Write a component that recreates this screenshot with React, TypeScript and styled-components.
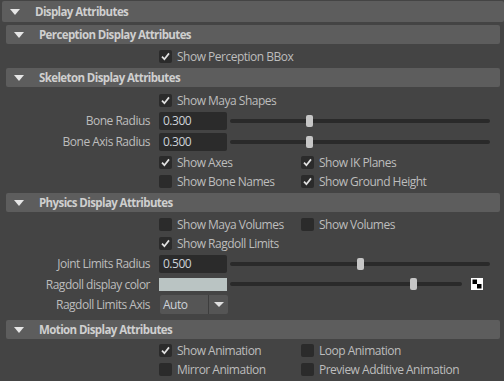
import React from "react";
import styled, { createGlobalStyle } from "styled-components";

const GlobalStyle = createGlobalStyle`
  html, body {
    margin: 0;
    padding: 0;
    background: #444444;
  }
`;

type CheckItem = { label: string; checked: boolean };

type Row =
  | { kind: "checks"; items: CheckItem[] }
  | { kind: "slider"; label: string; value: number }
  | { kind: "color"; label: string; color: string; value: number }
  | { kind: "select"; label: string; value: string };

type Section = { title: string; pad: string; rows: Row[] };

const sections: Section[] = [
  {
    title: "Perception Display Attributes",
    pad: "3px 0 2px",
    rows: [{ kind: "checks", items: [{ label: "Show Perception BBox", checked: true }] }],
  },
  {
    title: "Skeleton Display Attributes",
    pad: "4px 0 2px",
    rows: [
      { kind: "checks", items: [{ label: "Show Maya Shapes", checked: true }] },
      { kind: "slider", label: "Bone Radius", value: 0.3 },
      { kind: "slider", label: "Bone Axis Radius", value: 0.3 },
      {
        kind: "checks",
        items: [
          { label: "Show Axes", checked: true },
          { label: "Show IK Planes", checked: true },
        ],
      },
      {
        kind: "checks",
        items: [
          { label: "Show Bone Names", checked: false },
          { label: "Show Ground Height", checked: true },
        ],
      },
    ],
  },
  {
    title: "Physics Display Attributes",
    pad: "3px 0 5px",
    rows: [
      {
        kind: "checks",
        items: [
          { label: "Show Maya Volumes", checked: false },
          { label: "Show Volumes", checked: false },
        ],
      },
      { kind: "checks", items: [{ label: "Show Ragdoll Limits", checked: true }] },
      { kind: "slider", label: "Joint Limits Radius", value: 0.5 },
      { kind: "color", label: "Ragdoll display color", color: "#bac4c3", value: 0.8 },
      { kind: "select", label: "Ragdoll Limits Axis", value: "Auto" },
    ],
  },
  {
    title: "Motion Display Attributes",
    pad: "2px 0 0",
    rows: [
      {
        kind: "checks",
        items: [
          { label: "Show Animation", checked: true },
          { label: "Loop Animation", checked: false },
        ],
      },
      {
        kind: "checks",
        items: [
          { label: "Mirror Animation", checked: false },
          { label: "Preview Additive Animation", checked: false },
        ],
      },
    ],
  },
];

const fmt = (v: number) => v.toFixed(3);

export default function App() {
  const renderRow = (row: Row, idx: number) => {
    if (row.kind === "checks") {
      return (
        <CheckRow key={idx}>
          {row.items.map((c) => (
            <CheckLabel key={c.label}>
              <Box>
                {c.checked && (
                  <svg width="11" height="11" viewBox="0 0 11 11">
                    <path d="M2 5.6 L4.4 8.2 L9 2.4" fill="none" stroke="#e2e2e2" strokeWidth="1.7" />
                  </svg>
                )}
              </Box>
              {c.label}
            </CheckLabel>
          ))}
        </CheckRow>
      );
    }
    if (row.kind === "slider") {
      return (
        <FieldRow key={idx}>
          <Label>{row.label}</Label>
          <NumField>{fmt(row.value)}</NumField>
          <Slider $end={10}>
            <Thumb style={{ left: `calc(${row.value} * (100% - 7px))` }} />
          </Slider>
        </FieldRow>
      );
    }
    if (row.kind === "color") {
      return (
        <FieldRow key={idx} $short>
          <Label>{row.label}</Label>
          <Swatch $color={row.color} />
          <Slider $end={0}>
            <Thumb style={{ left: `calc(${row.value} * (100% - 7px))` }} />
          </Slider>
          <Checker>
            <svg width="12" height="12" viewBox="0 0 12 12">
              <rect x="0" y="0" width="12" height="12" fill="#ffffff" />
              <rect x="1.5" y="1.5" width="4.5" height="4.5" fill="#000000" />
              <rect x="6" y="6" width="4.5" height="4.5" fill="#000000" />
            </svg>
          </Checker>
        </FieldRow>
      );
    }
    return (
      <FieldRow key={idx}>
        <Label>{row.label}</Label>
        <Select>
          <span>{row.value}</span>
          <SelectArrow />
        </Select>
      </FieldRow>
    );
  };

  return (
    <Page>
      <GlobalStyle />
      <MainHeader>
        <Caret />
        Display Attributes
      </MainHeader>
      <Body>
        {sections.map((s) => (
          <div key={s.title}>
            <SubHeader>
              <Caret />
              {s.title}
            </SubHeader>
            <SectionBody $pad={s.pad}>{s.rows.map(renderRow)}</SectionBody>
          </div>
        ))}
      </Body>
    </Page>
  );
}

const Page = styled.div`
  width: 504px;
  height: 381px;
  overflow: hidden;
  background: #444444;
  padding-top: 1px;
  box-sizing: border-box;
  font-family: "Open Sans", "Noto Sans", sans-serif;
  font-size: 12px;
  letter-spacing: -0.5px;
  color: #bdbdbd;
`;

const Caret = styled.span`
  width: 0;
  height: 0;
  border-left: 5px solid transparent;
  border-right: 5px solid transparent;
  border-top: 6px solid #e6e6e6;
  margin-right: 15px;
  flex-shrink: 0;
`;

const MainHeader = styled.div`
  margin-left: 2px;
  height: 21px;
  background: #5d5d5d;
  border-radius: 2px;
  display: flex;
  align-items: center;
  padding-left: 8px;
  font-weight: bold;
  font-size: 11.5px;
  letter-spacing: -0.6px;
  color: #cfcfcf;
`;

const Body = styled.div`
  padding: 3px 4px 0 6px;
`;

const SubHeader = styled(MainHeader)`
  margin-left: 0;
  height: 19px;
`;

const SectionBody = styled.div<{ $pad: string }>`
  padding: ${(p) => p.$pad};
  display: flex;
  flex-direction: column;
`;

const CheckRow = styled.div`
  height: 19px;
  padding-left: 153px;
  display: grid;
  grid-template-columns: 142px 1fr;
  align-items: center;
`;

const CheckLabel = styled.label`
  display: flex;
  align-items: center;
  white-space: nowrap;
`;

const Box = styled.span`
  width: 13px;
  height: 13px;
  background: #2b2b2b;
  border-radius: 2px;
  margin-right: 5px;
  display: flex;
  align-items: center;
  justify-content: center;
`;

const FieldRow = styled.div<{ $short?: boolean }>`
  height: ${(p) => (p.$short ? 20 : 21)}px;
  display: flex;
  align-items: center;
  & + ${CheckRow} {
    margin-top: 1px;
  }
`;

const Label = styled.span`
  width: 144px;
  margin-right: 9px;
  text-align: right;
  white-space: nowrap;
`;

const NumField = styled.div`
  width: 68px;
  height: 18px;
  background: #2b2b2b;
  border-radius: 2px;
  box-sizing: border-box;
  padding-left: 4px;
  display: flex;
  align-items: center;
  color: #cdd2d8;
`;

const Swatch = styled.div<{ $color: string }>`
  width: 68px;
  height: 13px;
  background: ${(p) => p.$color};
`;

const Slider = styled.div<{ $end: number }>`
  position: relative;
  flex: 1;
  height: 12px;
  margin-left: 3px;
  margin-right: ${(p) => p.$end}px;
  &::before {
    content: "";
    position: absolute;
    left: 0;
    right: 0;
    top: 4px;
    height: 4px;
    border-radius: 2px;
    background: #2a2a2a;
  }
`;

const Thumb = styled.div`
  position: absolute;
  top: 0;
  width: 7px;
  height: 12px;
  border-radius: 2px;
  background: #c6c6c6;
`;

const Checker = styled.div`
  width: 12px;
  height: 12px;
  margin-left: 9px;
  margin-right: 17px;
  display: flex;
`;

const Select = styled.div`
  width: 68px;
  height: 19px;
  margin-left: 1px;
  background: #555555;
  border-radius: 2px;
  display: grid;
  grid-template-columns: 1fr 20px;
  align-items: center;
  color: #cdd2d8;
  span {
    padding-left: 3px;
  }
`;

const SelectArrow = styled.div`
  height: 100%;
  border-left: 1px solid #3d3d3d;
  display: flex;
  align-items: center;
  justify-content: center;
  &::after {
    content: "";
    border-left: 5px solid transparent;
    border-right: 5px solid transparent;
    border-top: 5px solid #e0e0e0;
  }
`;
